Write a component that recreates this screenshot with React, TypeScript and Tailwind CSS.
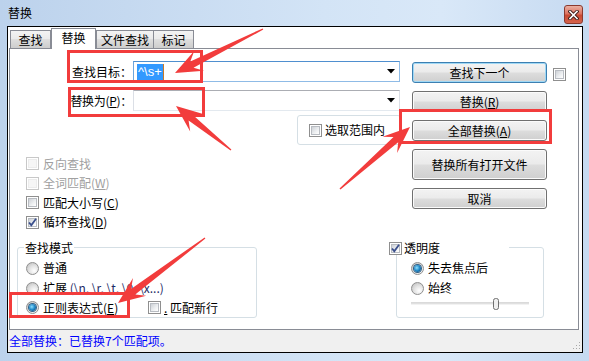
import React from "react";

function arrowPts(x1: number, y1: number, x2: number, y2: number): string {
  const dx = x2 - x1;
  const dy = y2 - y1;
  const L = Math.hypot(dx, dy);
  const ux = dx / L;
  const uy = dy / L;
  const nx = -uy;
  const ny = ux;
  const hl = 27;
  const hw = 11;
  const nw = 3.5;
  const tw = 0.7;
  const bx = x2 - ux * hl;
  const by = y2 - uy * hl;
  const kx = x2 - ux * hl * 0.7;
  const ky = y2 - uy * hl * 0.7;
  const pts = [
    [x1 + nx * tw, y1 + ny * tw],
    [kx + nx * nw, ky + ny * nw],
    [bx + nx * hw, by + ny * hw],
    [x2, y2],
    [bx - nx * hw, by - ny * hw],
    [kx - nx * nw, ky - ny * nw],
    [x1 - nx * tw, y1 - ny * tw],
  ];
  return pts.map((p) => `${p[0].toFixed(1)},${p[1].toFixed(1)}`).join(" ");
}

function Check({ checked = false, disabled = false }: { checked?: boolean; disabled?: boolean }) {
  return (
    <span
      className={`relative inline-flex w-[13px] h-[13px] shrink-0 border p-[1px] bg-white ${
        disabled ? "border-[#c8c8c8]" : "border-[#8f8f8f]"
      }`}
    >
      <span
        className={`block w-full h-full border ${
          disabled
            ? "border-[#ececec] bg-[#f6f6f6]"
            : "border-[#b8bcc2] bg-[linear-gradient(135deg,#cdd1d6,#eef0f2_60%,#ffffff)]"
        }`}
      />
      {checked && (
        <svg className="absolute left-0 top-0" width="11" height="11" viewBox="0 0 11 11">
          <path d="M2 5.5 L4.3 8.2 L9 1.8" fill="none" stroke="#3a4f8c" strokeWidth="1.8" />
        </svg>
      )}
    </span>
  );
}

function Radio({ checked = false }: { checked?: boolean }) {
  return (
    <span className="relative inline-flex w-[13px] h-[13px] shrink-0 rounded-full border border-[#8f8f8f] bg-[radial-gradient(circle_at_65%_70%,#ffffff,#e4e4e4_45%,#b9b9b9)] items-center justify-center">
      {checked && (
        <span className="block w-[7px] h-[7px] rounded-full bg-[radial-gradient(circle_at_40%_40%,#8fe0ff,#1d86c6_50%,#0b3c66)] shadow-[0_0_0_1px_#2f5f86]" />
      )}
    </span>
  );
}

function U({ children }: { children: React.ReactNode }) {
  return <span className="underline underline-offset-1">{children}</span>;
}

function Btn({
  children,
  tall = false,
  focused = false,
}: {
  children: React.ReactNode;
  tall?: boolean;
  focused?: boolean;
}) {
  return (
    <div
      className={`w-[135px] ${tall ? "h-[31px]" : "h-[21px]"} rounded-[3px] border ${
        focused ? "border-[#3c7fb1] shadow-[inset_0_0_0_1px_#9fd8f5]" : "border-[#707070] shadow-[inset_0_0_0_1px_#fbfbfb]"
      } bg-[linear-gradient(#f3f3f3,#ebebeb_48%,#dddddd_52%,#cfcfcf)] flex items-center justify-center text-[12px] leading-[14px]`}
    >
      {children}
    </div>
  );
}

function Combo({ focused = false, children }: { focused?: boolean; children?: React.ReactNode }) {
  return (
    <div
      className={`w-[267px] h-[21px] border flex items-center bg-white ${
        focused
          ? "border-[#8fbbe6] border-t-[#4f8fcf] border-l-[#6fa6dc]"
          : "border-[#dbdfe6] border-t-[#abadb3] border-b-[#e3e9ef]"
      }`}
    >
      <div className="flex-1 flex items-center pl-[3px]">{children}</div>
      <svg className="mr-[4px]" width="8" height="5" viewBox="0 0 8 5">
        <polygon points="0,0 8,0 4,4.5" fill="#000" />
      </svg>
    </div>
  );
}

export default function App() {
  const arrows = [
    arrowPts(263, 29, 175, 73),
    arrowPts(231, 150, 176, 106),
    arrowPts(340, 189, 410, 127),
    arrowPts(205, 238, 118, 303),
  ];
  return (
    <div className="relative w-[589px] h-[361px] overflow-hidden text-[12px] leading-[14px] text-black font-['Noto_Sans_CJK_SC','Noto_Sans',sans-serif] bg-[linear-gradient(90deg,#bcd2ec,#d3e4f6_55%,#d9e8f8_75%,#c6daf1)]">
      {/* title bar */}
      <div className="h-[26px] flex items-start justify-between">
        <div className="ml-[8px] mt-[6px]">替换</div>
        <div className="mt-[5px] mr-[6px] w-[19px] h-[19px] rounded-[3px] border border-[#8a3a2f] bg-[linear-gradient(#eab0a2,#dc7361_45%,#c94a33_55%,#d5634c)] flex items-center justify-center">
          <svg width="11" height="10" viewBox="0 0 11 10">
            <path d="M2 1.5 L9 8.5 M9 1.5 L2 8.5" stroke="#3b1d18" strokeWidth="3.4" strokeLinecap="square" />
            <path d="M2 1.5 L9 8.5 M9 1.5 L2 8.5" stroke="#ffffff" strokeWidth="1.6" strokeLinecap="square" />
          </svg>
        </div>
      </div>

      {/* client area */}
      <div className="ml-[7px] w-[576px] h-[327px] border border-black bg-white flex flex-col">
        {/* tabs */}
        <div className="h-[21px] flex items-end pl-[2px]">
          <div className="w-[41px] h-[18px] border border-b-0 border-[#898c95] bg-[linear-gradient(#f3f3f3,#ebebeb_45%,#dedede_50%,#cdcdcd)] flex items-center justify-center">
            查找
          </div>
          <div className="w-[45px] h-[21px] -mb-px relative z-10 border border-b-0 border-[#898c95] bg-white flex items-center justify-center pb-[2px]">
            替换
          </div>
          <div className="w-[58px] h-[18px] border border-b-0 border-[#898c95] bg-[linear-gradient(#f3f3f3,#ebebeb_45%,#dedede_50%,#cdcdcd)] flex items-center justify-center">
            文件查找
          </div>
          <div className="w-[40px] h-[18px] border border-b-0 border-l-0 border-[#898c95] bg-[linear-gradient(#f3f3f3,#ebebeb_45%,#dedede_50%,#cdcdcd)] flex items-center justify-center">
            标记
          </div>
        </div>

        {/* panel */}
        <div className="ml-[1px] w-[570px] h-[282px] border border-[#898c95] flex flex-col">
          <div className="flex items-start">
            {/* left column */}
            <div className="w-[390px] flex flex-col">
              <div className="mt-[12px] h-[21px] flex items-center">
                <div className="w-[123px] flex justify-end pr-[1px] whitespace-nowrap">查找目标：</div>
                <Combo focused>
                  <span className="h-[16px] px-[1px] bg-[#3399ff] text-white flex items-center font-['Liberation_Sans',sans-serif] text-[13px]">
                    ^\s+
                  </span>
                  <span className="w-[1px] h-[16px] bg-[#c97a28]" />
                </Combo>
              </div>
              <div className="mt-[8px] h-[21px] flex items-center">
                <div className="w-[123px] flex justify-end pr-[1px] whitespace-nowrap tracking-[-0.3px]">
                  替换为(<U>P</U>)：
                </div>
                <Combo />
              </div>
              <div className="mt-[4px] h-[30px] pl-[287px]">
                <div className="w-[104px] h-[30px] rounded-[3px] border border-[#d5dfe5] flex items-center pl-[11px] gap-[3px]">
                  <Check />
                  <span>选取范围内</span>
                </div>
              </div>
              <div className="mt-[9px] pl-[16px] flex flex-col">
                <div className="h-[19.5px] flex items-center gap-[4px] text-[#a0a0a0]">
                  <Check disabled />
                  <span>反向查找</span>
                </div>
                <div className="h-[19.5px] flex items-center gap-[4px] text-[#a0a0a0]">
                  <Check disabled />
                  <span>
                    全词匹配(<U>W</U>)
                  </span>
                </div>
                <div className="h-[19.5px] flex items-center gap-[4px]">
                  <Check />
                  <span>
                    匹配大小写(<U>C</U>)
                  </span>
                </div>
                <div className="h-[19.5px] flex items-center gap-[4px]">
                  <Check checked />
                  <span>
                    循环查找(<U>D</U>)
                  </span>
                </div>
              </div>
            </div>

            {/* buttons */}
            <div className="ml-[12px] mt-[13px] flex flex-col gap-[8px]">
              <Btn focused>查找下一个</Btn>
              <Btn>
                替换(<U>R</U>)
              </Btn>
              <Btn>
                全部替换(<U>A</U>)
              </Btn>
              <Btn tall>替换所有打开文件</Btn>
              <Btn>取消</Btn>
            </div>

            <div className="ml-[6px] mt-[18px]">
              <Check />
            </div>
          </div>

          {/* bottom groups */}
          <div className="mt-[15px] flex items-start">
            <div className="ml-[7px] w-[240px] h-[71px] relative rounded-[3px] border border-[#d5dfe5] pt-[10px] pl-[8px]">
              <div className="absolute top-[-7px] left-[6px] h-[14px] px-[1px] bg-white">查找模式</div>
              <div className="h-[20px] flex items-center gap-[4px]">
                <Radio />
                <span>普通</span>
              </div>
              <div className="h-[20px] flex items-center gap-[4px]">
                <Radio />
                <span>
                  扩展 <span className="text-[#1e2c66]">(\n, \r, \t, \0, \x...)</span>
                </span>
              </div>
              <div className="h-[19px] flex items-center">
                <div className="w-[122px] flex items-center gap-[4px]">
                  <Radio checked />
                  <span>
                    正则表达式(<U>E</U>)
                  </span>
                </div>
                <div className="flex items-center gap-[3px]">
                  <Check />
                  <span>
                    <U>.</U> 匹配新行
                  </span>
                </div>
              </div>
            </div>

            <div className="ml-[139px] w-[148px] h-[71px] relative rounded-[3px] border border-[#d5dfe5] pt-[10px] pl-[14px]">
              <div className="absolute top-[-7px] left-[-8px] w-[120px] h-[14px] bg-white flex items-center gap-[2px]">
                <Check checked />
                <span>透明度</span>
              </div>
              <div className="h-[20px] flex items-center gap-[4px]">
                <Radio checked />
                <span>失去焦点后</span>
              </div>
              <div className="h-[20px] flex items-center gap-[4px]">
                <Radio />
                <span>始终</span>
              </div>
              <svg className="block" width="118" height="13" viewBox="0 0 118 13">
                <rect x="0" y="4.5" width="118" height="1" fill="#b6b6b6" />
                <rect x="0" y="5.5" width="118" height="1" fill="#e6e6e6" />
                <rect x="82.5" y="0.5" width="5" height="11" rx="2" fill="#efefef" stroke="#6f6f6f" />
              </svg>
            </div>
          </div>
        </div>

        {/* status bar */}
        <div className="h-[22px] bg-[#f0f0f0] flex items-center justify-between pl-[1px] text-[#0000ff]">
          <span>全部替换：已替换7个匹配项。</span>
          <svg className="self-end mb-[2px] mr-[1px]" width="8" height="8" viewBox="0 0 8 8">
            <rect x="6" y="0" width="1" height="1" fill="#a8a8a8" />
            <rect x="3" y="3" width="1" height="1" fill="#a8a8a8" />
            <rect x="6" y="3" width="1" height="1" fill="#a8a8a8" />
            <rect x="0" y="6" width="1" height="1" fill="#a8a8a8" />
            <rect x="3" y="6" width="1" height="1" fill="#a8a8a8" />
            <rect x="6" y="6" width="1" height="1" fill="#a8a8a8" />
          </svg>
        </div>
      </div>

      {/* annotation overlays */}
      <div className="absolute left-[67px] top-[50px] w-[136px] h-[33px] border-[3px] border-[#f23c3c]" />
      <div className="absolute left-[68px] top-[87px] w-[137px] h-[30px] border-[3px] border-[#f23c3c]" />
      <div className="absolute left-[399px] top-[109px] w-[153px] h-[35px] border-[3px] border-[#f23c3c]" />
      <div className="absolute left-[9px] top-[292px] w-[121px] h-[26px] border-[3px] border-[#f23c3c]" />
      <svg className="absolute left-0 top-0 pointer-events-none" width="589" height="361" viewBox="0 0 589 361">
        {arrows.map((p, i) => (
          <polygon key={i} points={p} fill="#f23c3c" />
        ))}
      </svg>
    </div>
  );
}
